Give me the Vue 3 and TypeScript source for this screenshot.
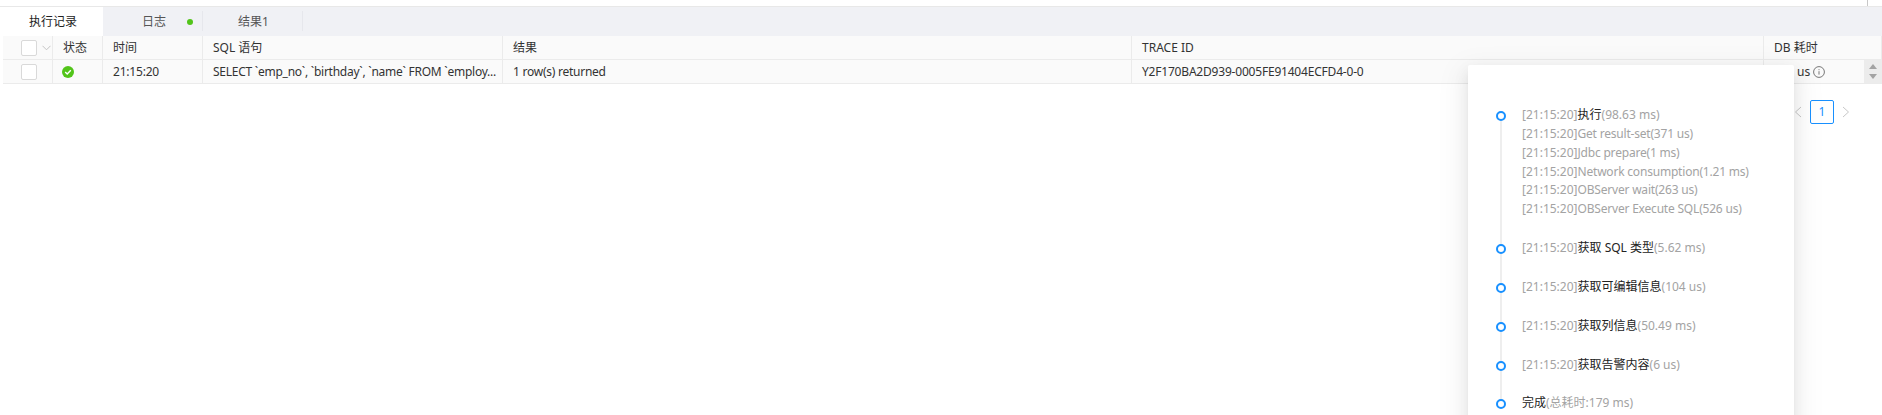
<script setup lang="ts">
interface Col { key: string; label: string; width: string }
const cols: Col[] = [
  { key: 'time', label: '时间', width: '100px' },
  { key: 'sql', label: 'SQL 语句', width: '300px' },
  { key: 'result', label: '结果', width: '629px' },
  { key: 'trace', label: 'TRACE ID', width: '632px' },
  { key: 'db', label: 'DB 耗时', width: '118px' },
]
const subs = [
  'Get result-set(371 us)',
  'Jdbc prepare(1 ms)',
  'Network consumption(1.21 ms)',
  'OBServer wait(263 us)',
  'OBServer Execute SQL(526 us)',
]
const steps = [
  { name: '获取 SQL 类型', time: '(5.62 ms)' },
  { name: '获取可编辑信息', time: '(104 us)' },
  { name: '获取列信息', time: '(50.49 ms)' },
  { name: '获取告警内容', time: '(6 us)' },
]
</script>

<template>
  <div class="page">
    <div class="top"><span class="tick"></span></div>
    <div class="tabs">
      <div class="tab active">执行记录</div>
      <div class="tab log">日志<span class="dot"></span></div>
      <div class="tab res">结果1</div>
    </div>
    <div class="row head">
      <div class="cell sel"><span class="check"></span><svg class="caret" width="9" height="6" viewBox="0 0 9 6"><path d="M.5.8l4 4 4-4" fill="none" stroke="#c4c4c4" /></svg></div>
      <div class="cell status">状态</div>
      <div v-for="c in cols" :key="c.key" class="cell" :style="{ width: c.width }">{{ c.label }}</div>
    </div>
    <div class="row body">
      <div class="cell sel"><span class="check"></span></div>
      <div class="cell status icon">
        <svg width="12" height="12" viewBox="0 0 12 12"><circle cx="6" cy="6" r="6" fill="#52c41a" /><path d="M3.2 6.1l2 2 3.6-3.8" fill="none" stroke="#fff" stroke-width="1.4" /></svg>
      </div>
      <div class="cell time"><span class="tight">21:15:20</span></div>
      <div class="cell sql"><span class="tighter">SELECT `emp_no`, `birthday`, `name` FROM `employ...</span></div>
      <div class="cell result"><span class="tighter">1 row(s) returned</span></div>
      <div class="cell trace"><span class="tight">Y2F170BA2D939-0005FE91404ECFD4-0-0</span></div>
      <div class="cell db">
        <span class="us">us</span>
        <svg width="12" height="12" viewBox="0 0 12 12"><circle cx="6" cy="6" r="5.4" fill="none" stroke="#777" /><path d="M6 5.2v3.4M6 3.2v1" stroke="#777" /></svg>
        <span class="scroll">
          <svg width="8" height="5" viewBox="0 0 8 5"><path d="M4 0l4 5H0z" fill="#a3a3a3" /></svg>
          <svg width="8" height="5" viewBox="0 0 8 5"><path d="M0 0h8L4 5z" fill="#a3a3a3" /></svg>
        </span>
      </div>
    </div>
    <div class="pager">
      <svg width="8" height="12" viewBox="0 0 8 12"><path d="M7 1L1.5 6 7 11" fill="none" stroke="#c8c8c8" /></svg>
      <span class="pg">1</span>
      <svg width="8" height="12" viewBox="0 0 8 12"><path d="M1 1l5.5 5L1 11" fill="none" stroke="#c8c8c8" /></svg>
    </div>

    <div class="pop">
      <div class="item">
        <span class="node"></span>
        <div class="line"><span class="g">[21:15:20]</span>执行<span class="g">(98.63 ms)</span></div>
        <div v-for="s in subs" :key="s" class="line g">[21:15:20]<span class="tight">{{ s }}</span></div>
      </div>
      <div v-for="s in steps" :key="s.name" class="item">
        <span class="node"></span>
        <div class="line"><span class="g">[21:15:20]</span>{{ s.name }}<span class="g">{{ s.time }}</span></div>
      </div>
      <div class="item last">
        <span class="node"></span>
        <div class="line">完成<span class="g">(总耗时:179 ms)</span></div>
      </div>
    </div>
  </div>
</template>

<style scoped>
.page {
  position: relative;
  width: 1882px;
  height: 415px;
  overflow: hidden;
  background: #fff;
  font-family: "Noto Sans", "Noto Sans CJK SC", sans-serif;
  font-size: 12px;
  color: #333;
}
.tight { letter-spacing: -0.2px; }
.tighter { letter-spacing: -0.25px; }
.top { height: 6px; border-bottom: 1px solid #e8e8e8; display: flex; justify-content: flex-end; padding-right: 14px; }
.tick { width: 1px; height: 6px; background: #c8c8c8; }
.tabs { display: flex; height: 29px; margin-left: 3px; background: #f0f1f5; }
.tab { height: 29px; line-height: 29px; box-sizing: border-box; color: #555; position: relative; }
.tab.active { width: 100px; background: #fff; color: #222; text-align: center; }
.tab.log { width: 100px; padding-left: 39px; }
.tab.res { width: 100px; padding-left: 35px; }
.tab.log::after, .tab.res::after {
  content: "";
  position: absolute;
  right: 0;
  top: 4px;
  height: 20px;
  width: 1px;
  background: #e6e7ec;
}
.dot { position: absolute; left: 84px; top: 12px; width: 6px; height: 6px; border-radius: 50%; background: #52c41a; }
.row { display: flex; margin-left: 3px; background: #fafafa; border-bottom: 1px solid #ebebeb; box-sizing: border-box; height: 24px; }
.cell { box-sizing: border-box; padding-left: 10px; line-height: 23px; border-right: 1px solid #ebebeb; white-space: nowrap; flex: none; display: flex; align-items: center; }
.sel { width: 50px; padding-left: 18px; gap: 5px; }
.status { width: 50px; }
.status.icon { padding-left: 9px; }
.time { width: 100px; }
.sql { width: 300px; }
.result { width: 629px; }
.trace { width: 632px; }
.check { width: 16px; height: 16px; background: #fff; border: 1px solid #d9d9d9; border-radius: 2px; box-sizing: border-box; }
.db { width: 118px; border-right: 0; position: relative; }
.us { margin-left: 23px; width: 16px; }
.scroll { position: absolute; right: 0; top: 0; width: 18px; height: 23px; background: #ececec; display: flex; flex-direction: column; align-items: center; justify-content: center; gap: 5px; }
.pager { display: flex; justify-content: flex-end; align-items: center; gap: 8px; padding: 16px 32px 0 0; }
.pg { width: 24px; height: 24px; box-sizing: border-box; border: 1px solid #1890ff; border-radius: 2px; color: #1890ff; text-align: center; line-height: 22px; }
.pop {
  position: absolute;
  left: 1468px;
  top: 65px;
  width: 326px;
  height: 400px;
  background: #fff;
  border-radius: 2px;
  box-shadow: 0 3px 6px -4px rgba(0, 0, 0, 0.12), 0 6px 16px 0 rgba(0, 0, 0, 0.08), 0 9px 28px 8px rgba(0, 0, 0, 0.05);
  padding: 41px 0 0 54px;
  box-sizing: border-box;
  color: #222;
}
.item { position: relative; padding-bottom: 20px; }
.line { line-height: 1.5715; white-space: nowrap; }
.g { color: #a3a3a3; }
.node {
  position: absolute;
  left: -26px;
  top: 5px;
  width: 10px;
  height: 10px;
  box-sizing: border-box;
  border: 2.5px solid #1890ff;
  border-radius: 50%;
  background: #fff;
  z-index: 1;
}
.item::before {
  content: "";
  position: absolute;
  left: -22px;
  top: 8px;
  bottom: -8px;
  width: 2px;
  background: #eeeeee;
}
.item.last::before { display: none; }
</style>
